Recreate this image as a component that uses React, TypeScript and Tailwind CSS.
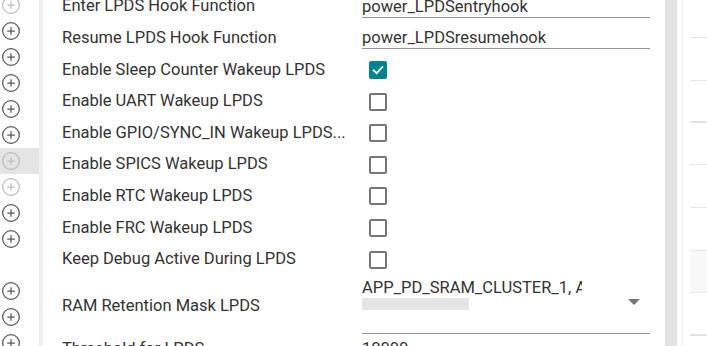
import { CirclePlus } from 'lucide-react';

const slots: (null | 'on' | 'off')[] = ['off', 'on', 'on', 'on', 'on', 'on', 'off', 'off', 'on', 'on', null, 'on', 'on', 'on'];

const rows = [
  { label: 'Enter LPDS Hook Function', text: 'power_LPDSentryhook' },
  { label: 'Resume LPDS Hook Function', text: 'power_LPDSresumehook' },
  { label: 'Enable Sleep Counter Wakeup LPDS', check: true },
  { label: 'Enable UART Wakeup LPDS', check: false },
  { label: 'Enable GPIO/SYNC_IN Wakeup LPDS...', check: false },
  { label: 'Enable SPICS Wakeup LPDS', check: false },
  { label: 'Enable RTC Wakeup LPDS', check: false },
  { label: 'Enable FRC Wakeup LPDS', check: false },
  { label: 'Keep Debug Active During LPDS', check: false },
];

function Checkbox({ checked }: { checked: boolean }) {
  if (checked) {
    return (
      <div className="ml-[7px] w-[18px] h-[18px] rounded-[2px] bg-[#00838f] flex items-center justify-center">
        <svg width="14" height="14" viewBox="0 0 24 24" fill="none" stroke="white" strokeWidth="3.2" strokeLinecap="square">
          <path d="M4.5 12.5l5 5L19.5 7" />
        </svg>
      </div>
    );
  }
  return <div className="ml-[7px] w-[18px] h-[18px] rounded-[2px] border-2 border-[#757575] bg-white" />;
}

export default function App() {
  return (
    <div className="w-[707px] h-[346px] overflow-hidden bg-white flex text-[#333] font-['Roboto',sans-serif]">
      {/* gutter */}
      <div className="w-[39px] shrink-0 flex flex-col -mt-[8px]">
        {slots.map((s, i) => (
          <div key={i} className={`h-[26px] shrink-0 flex items-center pl-[1px] ${i === 6 ? 'bg-[#e4e4e4]' : ''}`}>
            {s && <CirclePlus size={20} strokeWidth={1.5} className={s === 'on' ? 'text-[#585858]' : 'text-[#bdbdbd]'} />}
          </div>
        ))}
      </div>
      <div className="w-[4px] shrink-0 bg-[#efefef]" />

      {/* main form */}
      <div className="w-[622px] shrink-0 flex flex-col -mt-[9px] text-[16.5px]">
        {rows.map(r => (
          <div key={r.label} className="h-[31.6px] shrink-0 flex items-center">
            <div className="ml-[19px] w-[284px] whitespace-nowrap overflow-hidden">{r.label}</div>
            <div className="ml-[16px] w-[288px]">
              {r.text ? (
                <div className="border-b border-[#949494] leading-[19px] pb-[1px] mt-[1px]">{r.text}</div>
              ) : (
                <Checkbox checked={!!r.check} />
              )}
            </div>
          </div>
        ))}
        <div className="h-[59px] shrink-0 flex items-center">
          <div className="ml-[19px] w-[284px] truncate pt-[3px]">RAM Retention Mask LPDS</div>
          <div className="ml-[16px] w-[288px] h-full flex flex-col border-b border-[#949494]">
            <div className="flex items-start mt-[3px]">
              <div className="w-[220px] overflow-hidden whitespace-nowrap leading-[19px]">APP_PD_SRAM_CLUSTER_1, APP_PD_SRAM_CLUSTER_2</div>
            </div>
            <div className="flex items-center justify-between">
              <div className="w-[107px] h-[12px] bg-[#e4e4e4] mt-[1px]" />
              <svg width="12" height="6" viewBox="0 0 12 6" className="mr-[10px] -mt-[4px]">
                <path d="M0 0h12L6 6z" fill="#757575" />
              </svg>
            </div>
          </div>
        </div>
        <div className="h-[30px] shrink-0 flex items-center">
          <div className="ml-[19px] w-[284px] truncate">Threshold for LPDS</div>
          <div className="ml-[16px] w-[288px]">10000</div>
        </div>
      </div>

      {/* scroll strip */}
      <div className="w-[12px] shrink-0 bg-[#e3e3e3]" />
      <div className="w-[5px] shrink-0 bg-white" />
      <div className="w-[1px] shrink-0 bg-[#f2f2f2]" />

      {/* side panel */}
      <div className="flex-1 flex flex-col pl-[7px]">
        <div className="h-[38px] shrink-0 border-b border-[#e6e6e6]" />
        <div className="h-[43px] shrink-0 border-b border-[#e6e6e6]" />
        <div className="h-[42px] shrink-0 border-b-2 border-[#e3e3e3]" />
        <div className="h-[42px] shrink-0 border-b border-[#e6e6e6]" />
        <div className="h-[43px] shrink-0 border-b border-[#e6e6e6]" />
        <div className="h-[43px] shrink-0 border-b border-[#e6e6e6]" />
        <div className="h-[42px] shrink-0 border-b border-[#e6e6e6] bg-[#f8f8f8]" />
        <div className="h-[43px] shrink-0 border-b-2 border-[#e3e3e3]" />
      </div>
    </div>
  );
}
